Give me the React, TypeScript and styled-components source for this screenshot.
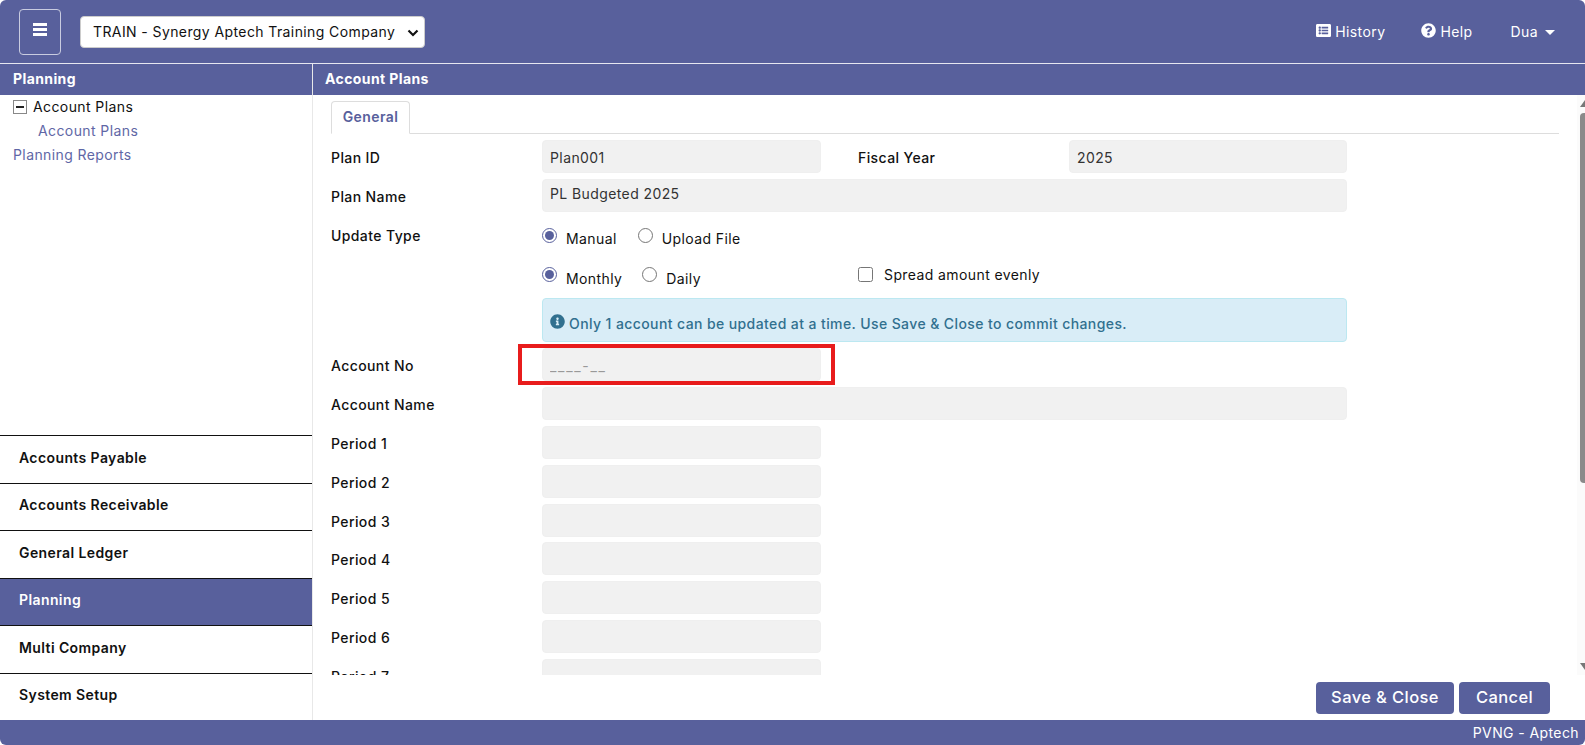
import React from "react";
import styled, { createGlobalStyle } from "styled-components";
import { FaListAlt, FaQuestionCircle, FaInfoCircle } from "react-icons/fa";

const Global = createGlobalStyle`
  html, body { margin: 0; padding: 0; height: 100%; background: #fff; overflow: hidden; }
  body { font-family: Inter, "Liberation Sans", sans-serif; font-size: 14px; letter-spacing: 0.4px; color: #111; }
  * { box-sizing: border-box; }
`;

const brand = "#58609c";

const Page = styled.div`
  width: 1585px; height: 745px; display: flex; flex-direction: column; background: #fff;
`;
const Header = styled.header`
  height: 63px; flex: none; background: ${brand}; border-radius: 6px 6px 0 0;
  display: flex; align-items: center; padding: 7px 30px 7px 19px; color: #fff;
`;
const MenuButton = styled.button`
  width: 42px; height: 46px; background: transparent; border: 1px solid #c9cce0; border-radius: 4px;
  color: #fff; display: flex; align-items: center; justify-content: center; padding: 0 0 5px;
`;
const SelectWrap = styled.div`
  position: relative; margin-left: 19px; width: 345px; height: 32px;
  svg { position: absolute; right: 6px; top: 13px; pointer-events: none; }
`;
const CompanySelect = styled.select`
  appearance: none; width: 100%; height: 100%; border: 1px solid #ccc; border-radius: 4px; background: #fff;
  font: 400 14px Inter, sans-serif; letter-spacing: 0.4px; color: #111; padding: 0 8px 0 12px;
`;
const NavLinks = styled.nav`
  margin-left: auto; display: flex; align-items: center;
`;
const NavLink = styled.span<{ $gap: number }>`
  display: flex; align-items: center; gap: 4px; margin-left: ${p => p.$gap}px; color: #fff;
  svg { margin-top: -3px; }
`;
const Caret = styled.span`
  width: 0; height: 0; margin-left: 3px; margin-top: 2px; border-left: 5px solid transparent; border-right: 5px solid transparent; border-top: 5px solid #fff;
`;
const Body = styled.div`
  flex: 1; min-height: 0; display: flex; border-top: 1px solid #e6e7f0;
`;
const Sidebar = styled.aside`
  width: 313px; flex: none; display: flex; flex-direction: column; border-right: 1px solid #e8e8e8;
`;
const TitleBar = styled.div<{ $pad: number }>`
  height: 31px; flex: none; background: ${brand}; color: #fff; font-weight: 700;
  display: flex; align-items: center; padding: 0 0 2px ${p => p.$pad}px;
`;
const Tree = styled.div`
  flex: 1; padding: 0 13px; line-height: 24px;
`;
const TreeRow = styled.div<{ $indent?: number; $link?: boolean }>`
  height: 24px; display: flex; align-items: center; gap: 6px; padding: 0 0 1px ${p => p.$indent || 0}px;
  color: ${p => (p.$link ? "#5f67a6" : "#111")};
`;
const MinusBox = styled.span`
  width: 14px; height: 14px; border: 1px solid #888; display: flex; align-items: center; justify-content: center;
  &::before { content: ""; width: 8px; height: 2px; background: #222; }
`;
const ModuleItem = styled.div<{ $active?: boolean }>`
  height: 47.5px; flex: none; display: flex; align-items: center; padding: 0 0 4px 19px; font-weight: 600;
  border-top: 1px solid #111;
  background: ${p => (p.$active ? brand : "#fff")}; color: ${p => (p.$active ? "#fff" : "#111")};
`;
const Main = styled.main`
  flex: 1; min-width: 0; display: flex; flex-direction: column;
`;
const ScrollArea = styled.div`
  position: relative; height: 580px; flex: none; overflow: hidden; padding: 6px 0 0 18px;
`;
const Tabs = styled.div`
  width: 1228px; height: 33px; border-bottom: 1px solid #ddd; display: flex;
`;
const Tab = styled.div`
  width: 79px; height: 33px; border: 1px solid #ddd; border-bottom-color: #fff; border-radius: 4px 4px 0 0; padding-bottom: 2px;
  color: ${brand}; font-weight: 600; display: flex; align-items: center; justify-content: center; background: #fff;
`;
const FormGrid = styled.div`
  display: grid; grid-template-columns: 211px 279px 37px 211px 278px; row-gap: 5.8px; margin-top: 6px; align-items: start;
`;
const Label = styled.label<{ $col?: number }>`
  grid-column: ${p => p.$col || 1}; font-weight: 500; padding-top: 9px; line-height: 18px;
`;
const Field = styled.input<{ $wide?: boolean; $col?: number; $lift?: boolean }>`
  grid-column: ${p => (p.$wide ? "2 / span 4" : p.$col || 2)};
  height: 33px; width: 100%; background: #f1f1f1; border: 1px solid #efefef; border-radius: 4px;
  padding: 1px 7px ${p => (p.$lift ? 5 : 0)}px;
  font: 400 14px/22px Inter, sans-serif; letter-spacing: 0.4px; color: #333; outline: none;
  &::placeholder { color: #999; line-height: 22px; letter-spacing: 1.7px; }
`;
const RadioGroup = styled.div`
  grid-column: 2 / span 2; display: flex; align-items: flex-start; height: 34px; padding-top: 10px;
`;
const RadioLabel = styled.label<{ $gap?: number }>`
  display: flex; align-items: center; gap: 9px; margin-left: ${p => p.$gap || 0}px;
  input { margin: 0 0 7px; width: 15px; height: 15px; accent-color: ${brand}; }
`;
const CheckLabel = styled.label`
  grid-column: 4 / span 2; display: flex; align-items: center; gap: 11px; height: 34px;
  input { margin: 0; width: 15px; height: 15px; }
`;
const Alert = styled.div`
  grid-column: 2 / span 4; height: 44px; background: #d9edf7; border: 1px solid #bce8f1; border-radius: 4px; color: #31708f;
  display: flex; align-items: center; gap: 4px; padding: 6px 7px 0; font-weight: 500; margin: 1px 0 0.5px;
  svg { margin-top: -3px; }
`;
const Highlight = styled.div`
  position: absolute; left: 205px; top: 249px; width: 317px; height: 41px; border: 4px solid #e81c1c; pointer-events: none;
`;
const ScrollTrack = styled.div`
  position: absolute; right: 0; top: 0; bottom: 0; width: 8px; background: #fbfbfb;
`;
const ScrollUp = styled.span`
  position: absolute; right: 0; top: 5px; width: 0; height: 0; border-left: 5px solid transparent; border-bottom: 7px solid #777;
`;
const ScrollDown = styled.span`
  position: absolute; right: 0; bottom: 5px; width: 0; height: 0; border-left: 5px solid transparent; border-top: 7px solid #777;
`;
const ScrollThumb = styled.span`
  position: absolute; right: 0; top: 18px; width: 5px; height: 370px; background: #8a8a8a; border-radius: 4px 0 0 4px;
`;
const ActionBar = styled.div`
  flex: 1; display: flex; justify-content: flex-end; align-items: flex-start; gap: 5px; padding: 7px 35px 0 0;
`;
const ActionButton = styled.button<{ $w: number }>`
  width: ${p => p.$w}px; height: 32px; border: none; border-radius: 4px; background: ${brand}; color: #fff; padding: 0 0 3px;
  font: 500 16.5px Inter, sans-serif; letter-spacing: 0.4px;
`;
const Footer = styled.footer`
  height: 25px; flex: none; background: ${brand}; color: #fff; border-radius: 0 0 6px 6px;
  display: flex; align-items: center; justify-content: flex-end; padding-right: 6px;
`;

const modules = ["Accounts Payable", "Accounts Receivable", "General Ledger", "Planning", "Multi Company", "System Setup"];
const periods = [1, 2, 3, 4, 5, 6, 7];

export default function App() {
  return (
    <Page>
      <Global />
      <Header>
        <MenuButton aria-label="Menu">
          <svg width="14" height="13" viewBox="0 0 14 13" fill="#fff">
            <rect y="0" width="14" height="3" />
            <rect y="5" width="14" height="3" />
            <rect y="10" width="14" height="3" />
          </svg>
        </MenuButton>
        <SelectWrap>
          <CompanySelect defaultValue="train">
            <option value="train">TRAIN - Synergy Aptech Training Company</option>
          </CompanySelect>
          <svg width="12" height="8" viewBox="0 0 12 8" fill="none" stroke="#111" strokeWidth="2.2">
            <path d="M1.5 1.5 L6 6 L10.5 1.5" />
          </svg>
        </SelectWrap>
        <NavLinks>
          <NavLink $gap={0}><FaListAlt size={15} /> History</NavLink>
          <NavLink $gap={36}><FaQuestionCircle size={15} /> Help</NavLink>
          <NavLink $gap={38}>Dua <Caret /></NavLink>
        </NavLinks>
      </Header>
      <Body>
        <Sidebar>
          <TitleBar $pad={13}>Planning</TitleBar>
          <Tree>
            <TreeRow><MinusBox /> Account Plans</TreeRow>
            <TreeRow $link $indent={25}>Account Plans</TreeRow>
            <TreeRow $link>Planning Reports</TreeRow>
          </Tree>
          {modules.map(m => <ModuleItem key={m} $active={m === "Planning"}>{m}</ModuleItem>)}
        </Sidebar>
        <Main>
          <TitleBar $pad={12}>Account Plans</TitleBar>
          <ScrollArea>
            <Tabs><Tab>General</Tab></Tabs>
            <FormGrid>
              <Label>Plan ID</Label>
              <Field readOnly value="Plan001" />
              <Label $col={4}>Fiscal Year</Label>
              <Field $col={5} readOnly value="2025" />
              <Label>Plan Name</Label>
              <Field $wide $lift readOnly value="PL Budgeted 2025" />
              <Label>Update Type</Label>
              <RadioGroup>
                <RadioLabel><input type="radio" name="u" defaultChecked /> Manual</RadioLabel>
                <RadioLabel $gap={21}><input type="radio" name="u" /> Upload File</RadioLabel>
              </RadioGroup>
              <RadioGroup>
                <RadioLabel><input type="radio" name="f" defaultChecked /> Monthly</RadioLabel>
                <RadioLabel $gap={20}><input type="radio" name="f" /> Daily</RadioLabel>
              </RadioGroup>
              <CheckLabel><input type="checkbox" /> Spread amount evenly</CheckLabel>
              <Alert><FaInfoCircle size={15} /> Only 1 account can be updated at a time. Use Save &amp; Close to commit changes.</Alert>
              <Label>Account No</Label>
              <Field readOnly placeholder="____-__" />
              <Label>Account Name</Label>
              <Field $wide readOnly />
              {periods.map(n => (
                <React.Fragment key={n}>
                  <Label>Period {n}</Label>
                  <Field readOnly />
                </React.Fragment>
              ))}
            </FormGrid>
            <Highlight />
            <ScrollTrack />
            <ScrollUp />
            <ScrollThumb />
            <ScrollDown />
          </ScrollArea>
          <ActionBar>
            <ActionButton $w={138}>Save &amp; Close</ActionButton>
            <ActionButton $w={91}>Cancel</ActionButton>
          </ActionBar>
        </Main>
      </Body>
      <Footer>PVNG - Aptech</Footer>
    </Page>
  );
}
